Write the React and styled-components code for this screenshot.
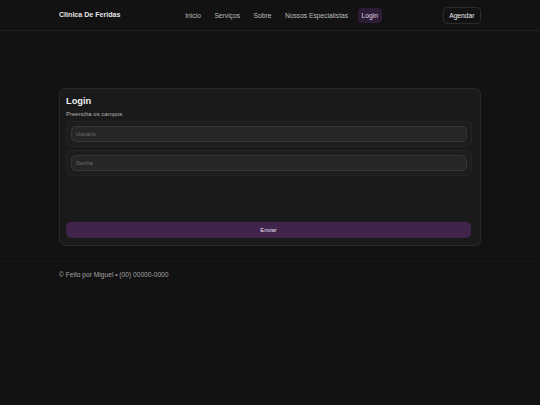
import React from 'react'
import styled, { createGlobalStyle } from 'styled-components'

const Global = createGlobalStyle`
    html, body {
        margin: 0;
        padding: 0;
        background: #121212;
        font-family: "Liberation Sans", Arial, sans-serif;
        color: #e6e6e6;
    }
    #root {
        min-height: 100vh;
        background: #121212;
    }
`

const Header = styled.header`
    height: 30px;
    border-bottom: 1px solid #1f1f1f;
    display: flex;
    align-items: center;
`

const Container = styled.div`
    width: 422px;
    margin: 0 auto;
`

const HeaderRow = styled(Container)`
    display: flex;
    justify-content: space-between;
    align-items: center;
`

const Brand = styled.div`
    font-size: 7.1px;
    font-weight: 700;
    color: #e4e4e4;
`

const Nav = styled.nav`
    display: flex;
    align-items: center;
    gap: 5.5px;
`

const NavLink = styled.a`
    font-size: 6.7px;
    color: ${p => (p.$active ? '#e2d6e8' : '#bdbdbd')};
    background: ${p => (p.$active ? '#2d1c35' : 'transparent')};
    border-radius: 4px;
    padding: 0 4px;
    height: 15px;
    display: flex;
    align-items: center;
    text-decoration: none;
`

const Agendar = styled.button`
    font-family: inherit;
    font-size: 6.7px;
    color: #ececec;
    background: #121212;
    border: 1px solid #2c2c2c;
    border-radius: 4px;
    height: 17px;
    padding: 0 5.5px;
`

const Main = styled.main`
    padding: 57px 0 15px;
`

const Card = styled.section`
    background: #1a1a1a;
    border: 1px solid #292929;
    border-radius: 6px;
    padding: 6px 9px 7px 6px;
    display: flex;
    flex-direction: column;
`

const Title = styled.h2`
    margin: 0;
    font-size: 9.3px;
    font-weight: 700;
    color: #efefef;
    line-height: 12px;
`

const Subtitle = styled.p`
    margin: 3px 0 3px;
    font-size: 6px;
    color: #b4b4b4;
    line-height: 8px;
`

const FieldGroup = styled.div`
    background: #1d1d1d;
    border: 1px solid #242424;
    border-radius: 5px;
    padding: 4px;
    margin-bottom: 3px;
    margin-right: -1px;
`

const Input = styled.input`
    display: block;
    box-sizing: border-box;
    width: 100%;
    height: 16px;
    background: #262626;
    border: 1px solid #363636;
    border-radius: 5px;
    padding: 0 4px;
    font-family: inherit;
    font-size: 5.8px;
    color: #ddd;
    outline: none;
    &::placeholder {
        color: #6f6f6f;
    }
`

const Submit = styled.button`
    margin-top: 43px;
    height: 16px;
    background: #40244b;
    border: none;
    border-radius: 5px;
    font-family: inherit;
    font-size: 5.8px;
    color: #e8e0ec;
`

const Footer = styled.footer`
    border-top: 1px solid #191919;
    padding-top: 9px;
`

const FooterText = styled.p`
    margin: 0;
    font-size: 6.65px;
    color: #a4a4a4;
`

const links = ['Inicio', 'Serviços', 'Sobre', 'Nossos Especialistas', 'Login']

export default function App() {
    return (
        <>
            <Global />
            <Header>
                <HeaderRow>
                    <Brand>Clinica De Feridas</Brand>
                    <Nav>
                        {links.map(l => (
                            <NavLink key={l} $active={l === 'Login'}>{l}</NavLink>
                        ))}
                    </Nav>
                    <Agendar>Agendar</Agendar>
                </HeaderRow>
            </Header>
            <Main>
                <Container>
                    <Card>
                        <Title>Login</Title>
                        <Subtitle>Preencha os campos</Subtitle>
                        <FieldGroup>
                            <Input placeholder="Usuario" />
                        </FieldGroup>
                        <FieldGroup>
                            <Input type="password" placeholder="Senha" />
                        </FieldGroup>
                        <Submit>Enviar</Submit>
                    </Card>
                </Container>
            </Main>
            <Footer>
                <Container>
                    <FooterText>© Feito por Miguel • (00) 00000-0000</FooterText>
                </Container>
            </Footer>
        </>
    )
}
